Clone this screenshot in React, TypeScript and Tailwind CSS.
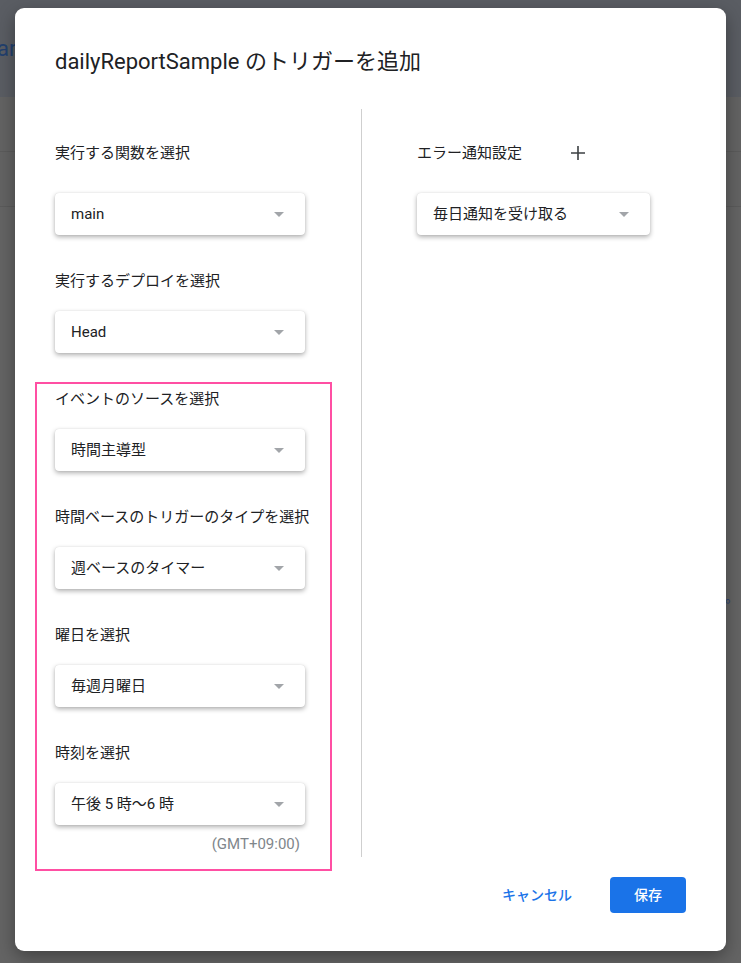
import React from "react";

const FONT = { fontFamily: 'Roboto, "Noto Sans CJK JP", "Noto Sans", sans-serif' };

function Caret() {
  return (
    <svg width="10" height="5" viewBox="0 0 10 5" className="shrink-0">
      <path d="M0 0h10L5 5z" fill="#a2a5a9" />
    </svg>
  );
}

function Select({ value, width }: { value: string; width: string }) {
  return (
    <div
      className={`flex h-[42px] items-center justify-between rounded-[4px] bg-white pl-4 pr-[21px] text-[15px] text-[#202124] shadow-[0_2px_5px_rgba(0,0,0,0.32),0_0_1px_rgba(0,0,0,0.15)] ${width}`}
    >
      <span>{value}</span>
      <Caret />
    </div>
  );
}

function Field({ label, value, top }: { label: string; value: string; top: string }) {
  return (
    <div className={top}>
      <div className="text-[15px] leading-5 text-[#202124]">{label}</div>
      <div className="mt-5">
        <Select value={value} width="w-[250px]" />
      </div>
    </div>
  );
}

export default function App() {
  return (
    <div className="relative h-[963px] w-full overflow-hidden bg-[#646464]" style={FONT}>
      {/* dimmed page behind the dialog */}
      <div className="flex h-[97px] items-center bg-[#5a5d63]">
        <span className="-ml-[3px] text-[22px] text-[#22406e]">ar</span>
      </div>
      <div className="h-[55px] border-b border-[#5b5b5b] bg-[#636363]" />
      <div className="h-[55px] border-b border-[#5b5b5b] bg-[#636363]" />
      <div className="flex justify-end pr-[2px] pt-[380px] text-[14px] text-[#2a4272]">。</div>

      {/* dialog */}
      <div className="absolute left-[15px] top-[8px] flex h-[943px] w-[711px] flex-col rounded-[9px] bg-white shadow-[0_6px_18px_rgba(0,0,0,0.35)]">
        <h1 className="pl-10 pt-[40px] text-[22px] leading-7 text-[#202124]">
          dailyReportSample のトリガーを追加
        </h1>

        <div className="mt-[33px] flex">
          <div className="w-[346px] pl-10 pt-[34px]">
            <div>
              <div className="text-[15px] leading-5 text-[#202124]">実行する関数を選択</div>
              <div className="mt-[30px]">
                <Select value="main" width="w-[250px]" />
              </div>
            </div>
            <Field label="実行するデプロイを選択" value="Head" top="mt-9" />

            <div className="-ml-5 mt-[29px] w-[297px] border-2 border-[#ff4fa3] pb-[15px] pl-[18px] pt-[5px]">
              <Field label="イベントのソースを選択" value="時間主導型" top="" />
              <Field label="時間ベースのトリガーのタイプを選択" value="週ベースのタイマー" top="mt-9" />
              <Field label="曜日を選択" value="毎週月曜日" top="mt-9" />
              <Field label="時刻を選択" value="午後 5 時〜6 時" top="mt-9" />
              <div className="mt-[9px] w-[245px] text-right text-[15px] leading-5 text-[#80868b]">
                (GMT+09:00)
              </div>
            </div>
          </div>

          <div className="h-[748px] w-px bg-[#cfcfcf]" />

          <div className="pl-[55px] pt-[34px]">
            <div className="flex h-5 items-center">
              <span className="text-[15px] leading-5 text-[#202124]">エラー通知設定</span>
              <svg width="14" height="14" viewBox="0 0 14 14" className="ml-[49px]">
                <path d="M7 0v14M0 7h14" stroke="#3c4043" strokeWidth="1.6" />
              </svg>
            </div>
            <div className="mt-[30px]">
              <Select value="毎日通知を受け取る" width="w-[233px]" />
            </div>
          </div>
        </div>

        <div className="mt-auto flex items-center justify-end gap-[38px] pb-[38px] pr-10">
          <button className="text-[14px] font-medium text-[#1a73e8]">キャンセル</button>
          <button className="h-9 w-[76px] rounded-[4px] bg-[#1a73e8] text-[14px] font-medium text-white">
            保存
          </button>
        </div>
      </div>
    </div>
  );
}
